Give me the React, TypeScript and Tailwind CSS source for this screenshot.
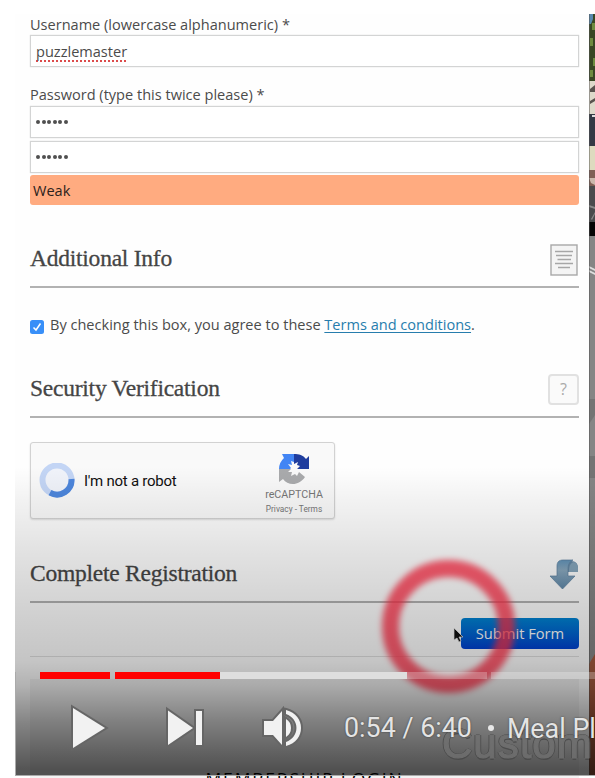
import React from "react";

const sans = "font-['Open_Sans','Liberation_Sans',sans-serif]";
const roboto = "font-['Roboto','Liberation_Sans',sans-serif]";

function Field({ children, className = "" }: { children: React.ReactNode; className?: string }) {
  return (
    <div className={`flex h-8 items-center border-[1.5px] border-[#d3d4d4] bg-white px-[5px] shadow-[0_0_1px_#0003] ${className}`}>{children}</div>
  );
}

function Dots() {
  return (
    <div className="flex gap-[1.5px]">
      {[0, 1, 2, 3, 4, 5].map((i) => (
        <span key={i} className="size-[4px] rounded-full bg-[#505050]" />
      ))}
    </div>
  );
}

function SectionHeading({ title, children, className = "" }: { title: string; children: React.ReactNode; className?: string }) {
  return (
    <div className={`flex h-[58px] items-center justify-between border-b-2 border-[#b2b2b2] ${className}`}>
      <h2 className="mt-[2px] whitespace-nowrap font-['Liberation_Serif',serif] text-[23.5px] leading-none tracking-[-0.24px] text-[#454545] [-webkit-text-stroke:0.3px_#454545]">
        {title}
      </h2>
      {children}
    </div>
  );
}

function PageIcon() {
  return (
    <svg width="28" height="32" viewBox="0 0 28 32" className="mr-[1px] mt-[3px]">
      <rect x="1" y="1" width="26" height="30" fill="#f4f4f4" stroke="#a8a8a8" strokeWidth="1.4" />
      <path d="M5 7.5H23M6 11.5H22M7.500 15.500H21M5 19.500H23M8 23.500H20" stroke="#a6a6a6" strokeWidth="1.4" />
    </svg>
  );
}

function ArrowIcon() {
  return (
    <svg width="30" height="32" viewBox="0 0 30 32" className="mt-[3px]">
      <defs>
        <linearGradient id="arrow" x1="0" y1="0" x2="0" y2="1">
          <stop offset="0" stopColor="#6395bb" />
          <stop offset="0.35" stopColor="#8aa9bf" />
          <stop offset="1" stopColor="#5f88a9" />
        </linearGradient>
      </defs>
      <path d="M13 2H22C27 2 29 5 29 9V13H19V8Z" fill="#698ca9" />
      <path d="M20 13C20 8 21 4 25 3C28 4 29 7 29 9V13Z" fill="#86a6bc" />
      <path d="M8 17V7C8 3 10 1 14 1H24C20 3 19 6 19 11V17H26L13.500 30L1 17Z" fill="url(#arrow)" stroke="#5c809e" strokeWidth=".7" />
    </svg>
  );
}

function RecaptchaLogo() {
  return (
    <svg width="31" height="32" viewBox="0 0 31 32">
      <path d="M0 16A15 15 0 0 1 5 5L3 1H15V9L12 8L13 12L9 11L12 15L11 16Z" fill="#4285f4" />
      <path d="M15 1C20 1 24 2 27 6L30 3V16H18L21 13L18 12L19 9L15 11Z" fill="#1f3d9e" />
      <path d="M0 16H12L9 19L13 19L12 23L16 21L18 23L20 19L26 24C20 33 9 33 4 26L0 29Z" fill="#a9aaac" />
    </svg>
  );
}

function Spinner() {
  return (
    <svg width="36" height="36" viewBox="0 0 36 36" className="ml-[8px] shrink-0" fill="none" strokeWidth="6">
      <circle cx="18" cy="17" r="14.5" fill="#f0f3fa" stroke="#c3d5f5" />
      <path d="M32.500 16A14.500 14.500 0 0 1 11 29.700" stroke="#4d86dc" />
    </svg>
  );
}

function StreetStrip() {
  return (
    <svg width="6" height="762" viewBox="0 0 6 762" preserveAspectRatio="none">
      <rect width="6" height="762" fill="#858585" />
      <rect width="6" height="68" fill="#394724" />
      <path d="M0 0H4V5L2 10H0Z" fill="#5888ad" />
      <path d="M3 9h3v7H3zM1 24h3v8H1zM4 44h2v8H4zM1 56h3v7H1z" fill="#6e8b40" />
      <rect y="67" width="6" height="33" fill="#ded9ca" />
      <path d="M1 75L6 71V78H1ZM1 87L6 84V87L1 90Z" fill="#59534e" />
      <rect y="100" width="6" height="32" fill="#333944" />
      <path d="M3 101h3v2H3z" fill="#ddd" />
      <rect y="132" width="6" height="24" fill="#dedbbf" />
      <rect y="156" width="6" height="16" fill="#805f55" />
      <path d="M0 164H6V171L2 169Z" fill="#cbb8ac" />
      <rect y="172" width="6" height="37" fill="#4a4b4d" />
      <path d="M0 191L6 193V195L0 193ZM2 205L6 198V200L3 206Z" fill="#888" />
      <rect y="208" width="6" height="14" fill="#050505" />
      <path d="M0 252L6 255V257L0 254ZM0 256L6 259V261L0 258Z" fill="#dedede" />
      <path d="M0 385h6v16l-6 9zM0 442h6v22H0z" fill="#747474" />
      <path d="M0 650L6 640V762H0Z" fill="#a3583d" />
      <path d="M0 0V762" stroke="#555" strokeWidth="1" />
    </svg>
  );
}

export default function App() {
  return (
    <div className={`relative h-[778px] w-[595px] overflow-hidden bg-white ${sans}`}>
      <div className="flex h-[776px] pl-[15px] pt-[14px]">
        <main className="h-[762px] w-[574px] bg-[#fefefe] pl-[15px] pr-[10px] text-[14.55px] text-[#4b4b4b]">
          <label className="flex h-[21px] items-center"><span className="whitespace-nowrap">Username (lowercase alphanumeric) *</span></label>
          <Field>
            <span className="mt-[2px] underline decoration-[#dc4c4c] decoration-dotted decoration-[1.5px] underline-offset-[3px] [text-decoration-skip-ink:none]">puzzlemaster</span>
          </Field>
          <label className="mt-4 flex h-[23px] items-center"><span className="whitespace-nowrap">Password (type this twice please) *</span></label>
          <Field>
            <Dots />
          </Field>
          <Field className="mt-[3px]">
            <Dots />
          </Field>
          <div className="mt-[2px] flex h-[30px] items-center rounded-[3px] bg-[#ffab80] pl-[3px] pt-[2px] text-[#2b211b]">Weak</div>

          <SectionHeading title="Additional Info" className="mt-[25px]">
            <PageIcon />
          </SectionHeading>
          <div className="mt-[22px] flex h-[30px] items-center">
            <span className="mt-[3px] flex size-[14px] items-center justify-center rounded-[2.5px] bg-[#388ff8]">
              <svg width="10" height="10" viewBox="0 0 10 10">
                <path d="M1.500 5.500L4 8L8.500 1.500" stroke="white" strokeWidth="1.5" fill="none" />
              </svg>
            </span>
            <span className="ml-[6px] whitespace-nowrap text-[14.55px]">
              By checking this box, you agree to these <a className="text-[#277dad] underline underline-offset-2">Terms and conditions</a>.
            </span>
          </div>
          <SectionHeading title="Security Verification" className="mt-[20px]">
            <span className="mt-[2px] flex size-[31px] items-center justify-center rounded-[4px] border-2 border-[#e1e1e1] bg-[#fafafa] text-[16px] text-[#aaa]">?</span>
          </SectionHeading>

          <div className={`mt-[24px] flex h-[77px] w-[305px] items-center rounded-[3px] border border-[#d2d2d2] bg-[#f9f9f9] shadow-[0_1px_2px_#0002] ${roboto}`}>
            <Spinner />
            <span className="ml-[9px] mt-px whitespace-nowrap text-[15px] tracking-[-0.25px] text-[#101010]">I'm not a robot</span>
            <div className="ml-auto mr-[10px] flex w-[60px] flex-col items-center pt-[7px] text-[#777]">
              <RecaptchaLogo />
              <span className="mt-[3px] whitespace-nowrap text-[10.7px] leading-[14px]">reCAPTCHA</span>
              <span className="whitespace-nowrap text-[8.3px] leading-[14px]">Privacy - Terms</span>
            </div>
          </div>

          <SectionHeading title="Complete Registration" className="mt-[26px]">
            <ArrowIcon />
          </SectionHeading>
          <div className="flex h-[54px] justify-end border-b border-[#e0e0e0] pt-[14px]">
            <button className="mt-px h-[31px] w-[118px] whitespace-nowrap rounded-[4px] bg-linear-to-b from-[#0083d2] to-[#0040d2] text-[14.7px] text-white">Submit Form</button>
          </div>
          <div className="mt-[22px] flex h-[99px] justify-center overflow-hidden bg-[#f3f3f3]">
            <span className="mt-[90px] whitespace-nowrap text-[17.5px] leading-[20px] tracking-[1.8px] text-black">MEMBERSHIP LOGIN</span>
          </div>
        </main>
        <StreetStrip />
      </div>

      <svg className="absolute left-[365px] top-[543px]" width="168" height="168" viewBox="0 0 168 168">
        <circle cx="83.500" cy="83.500" r="58" fill="none" stroke="#ff3048" strokeOpacity=".78" strokeWidth="17" className="blur-[3px]" />
        <path d="M89 85V97L92 95L94 99L96 98L94 94H98Z" fill="#111" stroke="#eee" strokeWidth=".7" />
      </svg>

      <div className="absolute bottom-[2px] left-[15px] right-0 top-[440px] bg-[linear-gradient(to_bottom,transparent_0%,transparent_8%,#0000000c_18%,#0000001c_33%,#0000002e_52%,#0000003a_66%,#0000004c_73%,#0000007a_84%,#000000aa_98%)]" />

      <span className="absolute left-[442px] top-[720px] whitespace-nowrap font-['Liberation_Sans',sans-serif] text-[42px] leading-[48px] tracking-[1px] text-[#707070] [-webkit-text-stroke:1.2px_#707070] [text-shadow:1.5px_0_#484848,-1.5px_0_#484848,0_1.5px_#484848,0_-1.5px_#484848] opacity-80">Custom</span>

      <div className={`absolute bottom-[2px] left-[15px] right-0 h-[104px] border-b border-l border-[#aaa] ${roboto}`}>
        <div className="ml-6 flex h-[7px] bg-transparent">
          <span className="w-[70px] bg-[#f00]" />
          <span className="ml-[5px] w-[105px] bg-[#f00]" />
          <span className="w-[187px] bg-[#dedede]" />
          <span className="w-[80px] bg-white/25" />
          <span className="ml-1 flex-1 bg-white/25" />
        </div>
        <div className="flex h-[97px] items-center text-[26.85px] text-[#e4e4e4]">
          <svg width="300" height="60" viewBox="15 698 300 60" className="shrink-0 fill-[#f2f2f2] stroke-[#666] [paint-order:stroke]" strokeWidth="4">
            <path d="M72 708V748L104 728Z" />
            <path d="M167 710.500V745L192 728Z" />
            <path d="M195 711H201V745H195Z" />
            <path d="M263 721H272L281 711V745L272 735H263Z" />
            <path d="M285 710C305 715 305 741 285 746V742C299 737 299 719 285 714Z" />
            <path d="M285 719Q290 722 290 728Q290 734 285 737Z" />
          </svg>
          <span className="ml-[28px] mt-[2px] whitespace-nowrap [text-shadow:0_0_2px_#0008]">0:54 / 6:40</span>
          <span className="ml-[16px] size-[6px] shrink-0 rounded-full bg-[#e8e8e8]" />
          <span className="ml-[13px] mt-[4px] whitespace-nowrap [text-shadow:0_0_2px_#0008]">Meal Pl</span>
        </div>
      </div>
    </div>
  );
}
